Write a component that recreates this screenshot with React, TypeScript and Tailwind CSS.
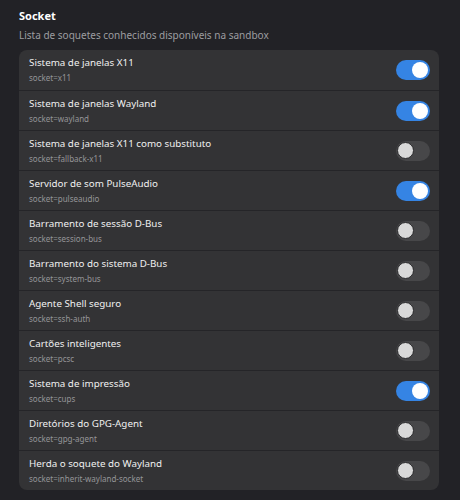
import * as React from "react";

interface SocketOption {
  title: string;
  key: string;
  enabled: boolean;
}

const options: SocketOption[] = [
  { title: "Sistema de janelas X11", key: "socket=x11", enabled: true },
  { title: "Sistema de janelas Wayland", key: "socket=wayland", enabled: true },
  { title: "Sistema de janelas X11 como substituto", key: "socket=fallback-x11", enabled: false },
  { title: "Servidor de som PulseAudio", key: "socket=pulseaudio", enabled: true },
  { title: "Barramento de sessão D-Bus", key: "socket=session-bus", enabled: false },
  { title: "Barramento do sistema D-Bus", key: "socket=system-bus", enabled: false },
  { title: "Agente Shell seguro", key: "socket=ssh-auth", enabled: false },
  { title: "Cartões inteligentes", key: "socket=pcsc", enabled: false },
  { title: "Sistema de impressão", key: "socket=cups", enabled: true },
  { title: "Diretórios do GPG-Agent", key: "socket=gpg-agent", enabled: false },
  { title: "Herda o soquete do Wayland", key: "socket=inherit-wayland-socket", enabled: false },
];

function Toggle({ on, onClick }: { on: boolean; onClick: () => void }) {
  return (
    <button
      onClick={onClick}
      className={
        on
          ? "flex h-[20px] w-[34px] items-center justify-end rounded-full bg-[#3584e4] px-[2px]"
          : "flex h-[20px] w-[34px] items-center justify-start rounded-full bg-[#474749] px-[1px]"
      }
    >
      <span
        className={
          on
            ? "h-[16px] w-[16px] rounded-full bg-white"
            : "h-[17px] w-[17px] rounded-full border border-[#2a2a2c] bg-[#d9d9d9]"
        }
      />
    </button>
  );
}

export default function App() {
  const [state, setState] = React.useState(options.map((o) => o.enabled));

  return (
    <div
      className="min-h-[500px] bg-[#222226] pl-[19px] pr-[21px] pt-[8px]"
      style={{ fontFamily: '"Noto Sans", sans-serif' }}
    >
      {/* Header */}
      <h2 className="text-[11px] font-bold leading-[16px] text-white">Socket</h2>
      <p className="mt-[3px] text-[10px] leading-[16px] text-[#9d9da0]">
        Lista de soquetes conhecidos disponíveis na sandbox
      </p>

      {/* Options */}
      <div className="mt-[7px] overflow-hidden rounded-[8px] bg-[#333335]">
        {options.map((o, i) => (
          <div
            key={o.key}
            className={
              i === 0
                ? "flex h-[40px] items-center justify-between pl-[10px] pr-[9px]"
                : "flex h-[40px] items-center justify-between border-t border-[#252528] pl-[10px] pr-[9px]"
            }
          >
            <div className="flex flex-col">
              <span className="text-[9.8px] leading-[14px] text-[#f0f0f0]">{o.title}</span>
              <span className="mt-[2px] text-[8px] leading-[12px] text-[#959598]">{o.key}</span>
            </div>
            <Toggle
              on={state[i]}
              onClick={() => setState((s) => s.map((v, j) => (j === i ? !v : v)))}
            />
          </div>
        ))}
      </div>
    </div>
  );
}
